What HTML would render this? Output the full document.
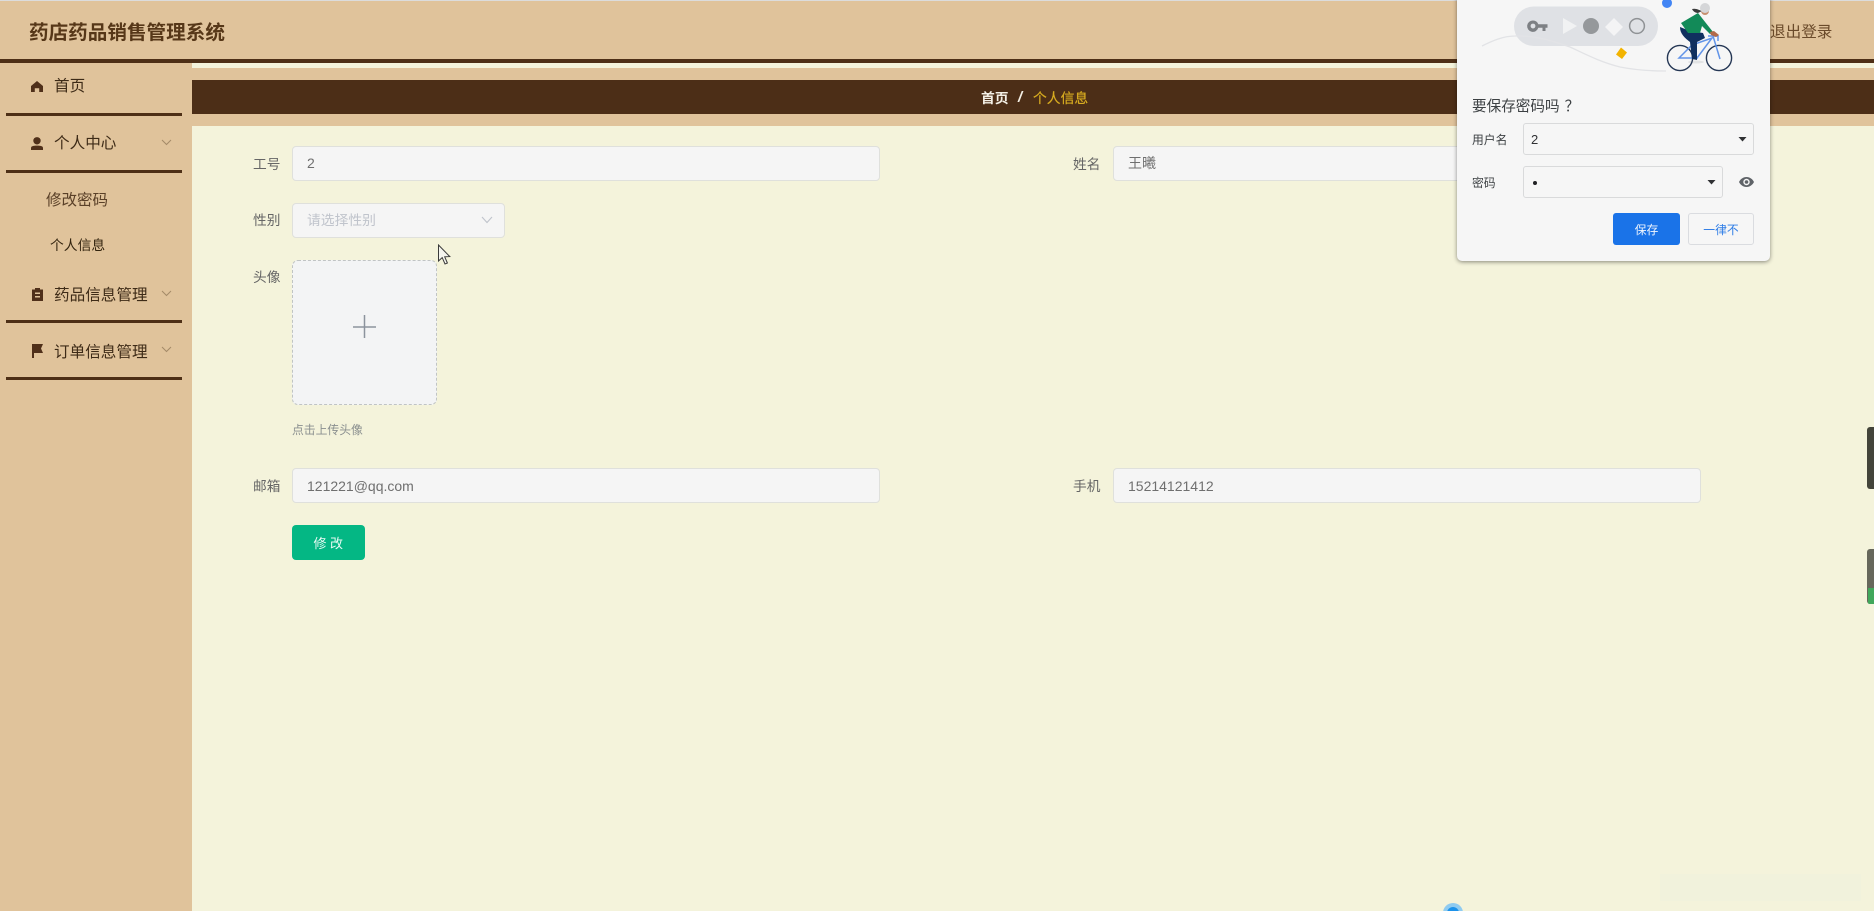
<!DOCTYPE html>
<html lang="zh"><head><meta charset="utf-8"><title>药店药品销售管理系统</title>
<style>
*{box-sizing:border-box}
html,body{margin:0;padding:0;width:1874px;height:911px;overflow:hidden;background:#f4f3db;font-family:"Liberation Sans","Noto Sans CJK SC",sans-serif}
#w{position:relative;width:1874px;height:911px;overflow:hidden;background:#f4f3db;filter:blur(.35px)}
.a{position:absolute;white-space:nowrap}
.t{position:absolute;white-space:nowrap;line-height:20px;height:20px}
.line{position:absolute;left:6px;width:176px;height:3px;background:#4e2f16}
.lab{position:absolute;white-space:nowrap;font-size:13.7px;line-height:20px;color:#666}
.inp{position:absolute;height:35px;background:#f5f5f5;border:1px solid #dfe0dc;border-radius:4px;font-size:14px;line-height:33px;color:#6f6f6f;padding-left:14px}
.nav{position:absolute;left:54px;white-space:nowrap;font-size:15.6px;line-height:20px;color:#3e2b17}
.chev{position:absolute}
</style></head><body>
<div id="w">
<div class="a" style="left:0;top:0;width:1874px;height:60px;background:#e0c39b"></div>
<div class="a" style="left:0;top:0;width:1874px;height:1px;background:#dcdcdc"></div>
<div class="a" style="left:0;top:59px;width:1874px;height:4px;background:#4e2f16"></div>
<div class="t" style="left:29px;top:23px;font-size:19.6px;font-weight:bold;color:#563718">药店药品销售管理系统</div>
<div class="t" style="left:1770px;top:23px;font-size:15.6px;color:#6a4a2a">退出登录</div>

<div class="a" style="left:0;top:63px;width:192px;height:848px;background:#e0c39b"></div>
<div class="a" style="left:192px;top:68px;width:1682px;height:58px;background:#e0c39b"></div>
<div class="a" style="left:192px;top:80px;width:1682px;height:34px;background:#4c2e17"></div>

<div class="t" style="left:981px;top:89px;font-size:13.8px;font-weight:bold;color:#f4f0e6">首页</div>
<div class="t" style="left:1018px;top:88px;font-size:15px;font-weight:bold;font-style:italic;color:#f4f0e6">/</div>
<div class="t" style="left:1033px;top:89px;font-size:13.8px;color:#d8ac20;-webkit-text-stroke:.2px #d8ac20">个人信息</div>

<!-- sidebar -->
<svg class="a" style="left:31px;top:81px" width="12" height="11" viewBox="0 0 12 11"><path d="M6 0 L12 5 V11 H8.2 V7.2 H3.8 V11 H0 V5 Z" fill="#50301a"/></svg>
<div class="nav" style="top:77px">首页</div>
<div class="line" style="top:113px"></div>
<svg class="a" style="left:31px;top:137px" width="12" height="13" viewBox="0 0 12 13"><circle cx="6" cy="3.8" r="3.7" fill="#50301a"/><path d="M0 13 V11 C0 9 2.5 8.6 6 8.6 S12 9 12 11 V13 Z" fill="#50301a"/></svg>
<div class="nav" style="top:134px">个人中心</div>
<svg class="chev" style="left:161px;top:139px" width="11" height="7" viewBox="0 0 11 7"><path d="M1 1 L5.5 5.5 L10 1" fill="none" stroke="#a48a68" stroke-width="1"/></svg>
<div class="line" style="top:170px"></div>
<div class="t" style="left:46px;top:191px;font-size:15.5px;color:#5a4028">修改密码</div>
<div class="t" style="left:50px;top:236px;font-size:13.8px;color:#33240f">个人信息</div>
<svg class="a" style="left:32px;top:288px" width="11" height="13" viewBox="0 0 11 13"><path fill-rule="evenodd" d="M0 1.5 H3 V0 H8 V1.5 H11 V13 H0 Z M3 4.5 V6 H8 V4.5 Z M3 8 V9.5 H8 V8 Z" fill="#50301a"/></svg>
<div class="nav" style="top:286px">药品信息管理</div>
<svg class="chev" style="left:161px;top:290px" width="11" height="7" viewBox="0 0 11 7"><path d="M1 1 L5.5 5.5 L10 1" fill="none" stroke="#a48a68" stroke-width="1"/></svg>
<div class="line" style="top:320px"></div>
<svg class="a" style="left:32px;top:344px" width="11" height="14" viewBox="0 0 11 14"><path d="M0 0 H11 L9 4.5 L11 9 H2 V14 H0 Z" fill="#50301a"/></svg>
<div class="nav" style="top:343px">订单信息管理</div>
<svg class="chev" style="left:161px;top:346px" width="11" height="7" viewBox="0 0 11 7"><path d="M1 1 L5.5 5.5 L10 1" fill="none" stroke="#a48a68" stroke-width="1"/></svg>
<div class="line" style="top:377px"></div>

<!-- form -->
<div class="lab" style="left:253px;top:155px">工号</div>
<div class="inp" style="left:292px;top:146px;width:588px">2</div>
<div class="lab" style="left:1073px;top:155px">姓名</div>
<div class="inp" style="left:1113px;top:146px;width:588px">王曦</div>
<div class="lab" style="left:253px;top:211px">性别</div>
<div class="inp" style="left:292px;top:203px;width:213px;color:#c0c4cc;font-size:13.8px">请选择性别</div>
<svg class="a" style="left:481px;top:215px" width="12" height="10" viewBox="0 0 12 10"><path d="M1 2 L6 7.5 L11 2" fill="none" stroke="#c0c4cc" stroke-width="1.1"/></svg>
<div class="lab" style="left:253px;top:268px">头像</div>
<div class="a" style="left:292px;top:260px;width:145px;height:145px;background:#f3f4f5;border:1px dashed #c0c4c4;border-radius:6px"></div>
<svg class="a" style="left:353px;top:315px" width="24" height="24" viewBox="0 0 24 24"><path d="M0 12 H23 M11.5 0 V23" stroke="#8c939d" stroke-width="1.5" fill="none"/></svg>
<div class="t" style="left:292px;top:420px;font-size:11.8px;color:#8a8f8f">点击上传头像</div>
<div class="lab" style="left:253px;top:477px">邮箱</div>
<div class="inp" style="left:292px;top:468px;width:588px;line-height:34px">121221@qq.com</div>
<div class="lab" style="left:1073px;top:477px">手机</div>
<div class="inp" style="left:1113px;top:468px;width:588px;line-height:34px">15214121412</div>
<div class="a" style="left:292px;top:525px;width:72.5px;height:35px;background:#04b784;border-radius:4px;color:#eafaf4;font-size:13px;line-height:38px;text-align:center">修 改</div>

<!-- cursor -->
<svg class="a" style="left:437px;top:244px" width="15" height="22" viewBox="0 0 15 22"><path d="M1.5 1 V17 L5.2 13.6 L8 20 L10.4 19 L7.7 12.8 L12.8 12.6 Z" fill="#f4f4ee" stroke="#3a3a3a" stroke-width="1"/></svg>

<!-- right side bits -->
<div class="a" style="left:1867px;top:427px;width:7px;height:62px;background:#43443a;border-radius:3px 0 0 3px"></div>
<div class="a" style="left:1867px;top:549px;width:7px;height:55px;background:#66675b;border-radius:3px 0 0 3px;overflow:hidden"><div style="position:absolute;left:1px;top:39px;width:6px;height:16px;background:#41a75b"></div></div>
<div class="a" style="left:1660px;top:874px;width:201px;height:27px;background:#f1f2dc"></div>
<div class="a" style="left:1443px;top:903px;width:20px;height:20px;border-radius:50%;background:#8fcbf0"></div>
<div class="a" style="left:1447px;top:907px;width:12px;height:12px;border-radius:50%;background:#1c92ea"></div>

<!-- password popup -->
<div class="a" style="left:1457px;top:-4px;width:313px;height:265px;background:#f6f6f6;border-radius:0 0 5px 5px;box-shadow:0 1px 4px rgba(0,0,0,.45)"></div>
<svg class="a" style="left:1457px;top:0" width="313" height="80" viewBox="1457 0 313 80">
<rect x="1514" y="6.5" width="144" height="39.5" rx="19.7" fill="#dfe1e5"/>
<path d="M1482 46 C1492 41 1503 36 1515 36 C1530 35.5 1545 38 1570 47 C1585 54 1600 62 1620 67 C1635 70 1650 71 1666 71" fill="none" stroke="#e2e3e6" stroke-width="1.3"/>
<g fill="#7d8084"><path fill-rule="evenodd" d="M1533 20.5 a5.7 5.7 0 0 1 5.3 3.7 H1547.5 V27.8 H1545.5 V31 H1542.5 V27.8 H1538.3 a5.7 5.7 0 1 1 -5.3 -7.3 Z M1533 23.6 a2.4 2.4 0 1 0 .01 0 Z"/></g>
<path d="M1563 18 L1577 26 L1563 34 Z" fill="#f1f2f3"/>
<circle cx="1591" cy="26" r="8" fill="#95989b"/>
<path d="M1614 18 L1623 27 L1614 36 L1605 27 Z" fill="#f4f4f5"/>
<circle cx="1637" cy="26" r="7.4" fill="none" stroke="#8f9295" stroke-width="1.5"/>
<path d="M1621 47.5 L1627 52.5 L1622 59 L1616 54.5 Z" fill="#f2b300"/>
<circle cx="1667" cy="3" r="5" fill="#4285f4"/>
<!-- bike -->
<ellipse cx="1696" cy="62" rx="8" ry="1.5" fill="#e2e3e4"/>
<circle cx="1680" cy="58" r="12.6" fill="none" stroke="#243654" stroke-width="1.4"/>
<circle cx="1719" cy="58" r="12.6" fill="none" stroke="#243654" stroke-width="1.4"/>
<path d="M1679 58 L1692 45 L1697 58 Z M1692 45 L1712 38 L1697 58 M1713 36 L1720 59 M1708 36 L1718 36 L1718 41" fill="none" stroke="#6294e8" stroke-width="1.5"/>
<path d="M1680 27 L1690 31 L1703 33 L1705 38 L1697 42 L1697 60 L1692 59 L1690 42 C1685 38 1680 34 1680 27 Z" fill="#10305f"/>
<path d="M1681 23 L1698 13 L1713 32 L1710 34 L1702 26 L1700 33 L1688 33 Z" fill="#128a58"/>
<path d="M1710 32 L1714 31 L1719 35 L1716 37 L1711 35 Z" fill="#b26a4a"/>
<circle cx="1705" cy="11" r="4" fill="#c79070"/>
<path d="M1692 9 C1696 8 1699 10 1702 11 L1698 13 C1695 13 1693 11 1692 9 Z" fill="#3b3b3b"/>
<circle cx="1705" cy="8" r="5" fill="#d5d6d8"/>
</svg>
<div class="t" style="left:1472px;top:96px;font-size:14.6px;color:#3c4043">要保存密码吗<span style="font-family:'Noto Sans CJK TC',sans-serif;margin-left:5px">？</span></div>
<div class="t" style="left:1472px;top:130px;font-size:11.8px;color:#3c4043">用户名</div>
<div class="a" style="left:1523px;top:123px;width:231px;height:32px;border:1px solid #d9dadb;border-radius:3px;font-size:13px;line-height:31px;color:#303134;padding-left:7px">2</div>
<svg class="a" style="left:1738px;top:136px" width="9" height="6" viewBox="0 0 9 6"><path d="M0.5 1 H8.5 L4.5 5.5 Z" fill="#303134"/></svg>
<div class="t" style="left:1472px;top:173px;font-size:11.8px;color:#3c4043">密码</div>
<div class="a" style="left:1523px;top:166px;width:200px;height:32px;border:1px solid #d9dadb;border-radius:3px"></div>
<div class="a" style="left:1533px;top:181px;width:4px;height:4px;border-radius:50%;background:#202124"></div>
<svg class="a" style="left:1707px;top:179px" width="9" height="6" viewBox="0 0 9 6"><path d="M0.5 1 H8.5 L4.5 5.5 Z" fill="#303134"/></svg>
<svg class="a" style="left:1739px;top:175px" width="15" height="14" viewBox="0 0 15 14"><path fill-rule="evenodd" d="M7.5 2 C11 2 13.6 4.2 15 7 C13.6 9.8 11 12 7.5 12 S1.4 9.8 0 7 C1.4 4.2 4 2 7.5 2 Z M7.5 3.8 a3.2 3.2 0 1 0 .01 0 Z" fill="#5f6368"/><circle cx="7.5" cy="7" r="1.8" fill="#5f6368"/></svg>
<div class="a" style="left:1613px;top:213px;width:67px;height:32px;background:#1a73e8;border-radius:3px;color:#f1f6fe;font-size:11.8px;line-height:34px;text-align:center">保存</div>
<div class="a" style="left:1688px;top:213px;width:66px;height:32px;border:1px solid #dadce0;border-radius:3px;color:#2f7de6;font-size:11.8px;line-height:32px;text-align:center">一律不</div>
</div>
</body></html>
